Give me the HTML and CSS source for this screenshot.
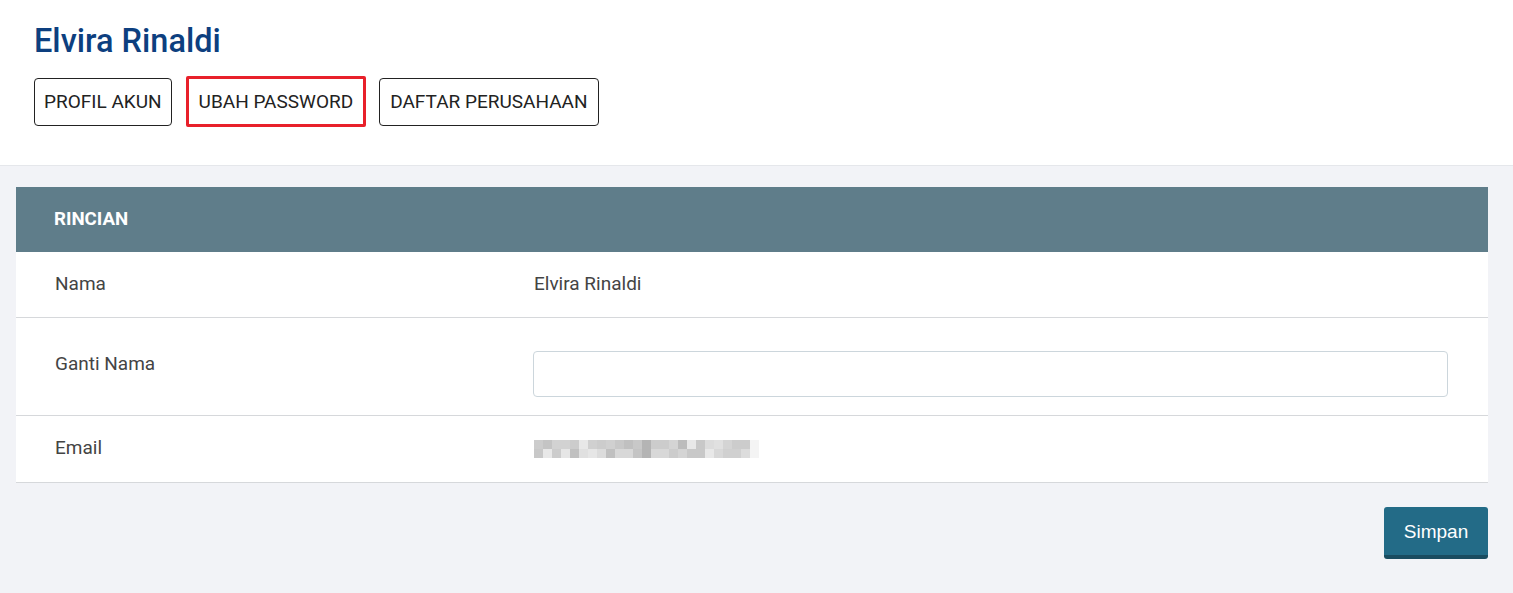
FILE: index.html
```html
<!DOCTYPE html>
<html lang="id">
<head>
    <meta charset="UTF-8">
    <title>Elvira Rinaldi - Ubah Password</title>
    <link rel="stylesheet" href="styles.css">
</head>
<body>
    <header class="page-header">
        <h1 class="user-name">Elvira Rinaldi</h1>
        <nav class="tabs">
            <button class="tab">PROFIL AKUN</button>
            <button class="tab tab-active">UBAH PASSWORD</button>
            <button class="tab tab-wide">DAFTAR PERUSAHAAN</button>
        </nav>
    </header>

    <main class="content">
        <section class="card">
            <div class="card-title">RINCIAN</div>
            <div class="row">
                <div class="label">Nama</div>
                <div class="value">Elvira Rinaldi</div>
            </div>
            <div class="row row-input">
                <div class="label">Ganti Nama</div>
                <div class="value"><input type="text" class="text-input"></div>
            </div>
            <div class="row">
                <div class="label">Email</div>
                <div class="value"><span class="email-mask"></span></div>
            </div>
        </section>

        <div class="actions">
            <button class="save-button">Simpan</button>
        </div>
    </main>
</body>
</html>
```

FILE: styles.css
```css
body {
    margin: 0;
    font-family: 'Roboto', 'Liberation Sans', sans-serif;
    background-color: #f2f3f7;
    color: #444;
}

.page-header {
    background-color: #fff;
    border-bottom: 1px solid #e5e7eb;
    padding: 21px 34px 38px;
}

.user-name {
    margin: 0 0 15px;
    font-size: 32.5px;
    font-weight: 500;
    color: #0d3f7f;
    line-height: 40px;
}

.tabs {
    display: flex;
    align-items: center;
}

.tab {
    font-family: 'Roboto', 'Liberation Sans', sans-serif;
    font-size: 19px;
    color: #222;
    background-color: #fff;
    border: 1px solid #222;
    border-radius: 4px;
    height: 48px;
    padding: 0 9px;
    margin-right: 14px;
    cursor: pointer;
}

.tab-wide {
    padding: 0 10px;
}

/* tab yang sedang dipilih */
.tab-active {
    border: 3px solid #e8202a;
    border-radius: 2px;
    height: 51px;
    padding: 0 10px;
    margin-right: 13px;
}

.content {
    padding: 21px 25px 34px 16px;
}

.card {
    background-color: #fff;
    border-bottom: 1px solid #d6d8db;
}

.card-title {
    background-color: #5f7d8a;
    color: #fff;
    font-weight: 700;
    font-size: 18.7px;
    height: 65px;
    line-height: 65px;
    padding-left: 38px;
}

.row {
    display: flex;
    padding: 21px 39px 22px;
    border-bottom: 1px solid #d6d8db;
    font-size: 19px;
    line-height: 22px;
}

.row:last-child {
    border-bottom: none;
    padding-bottom: 23px;
}

.row-input {
    padding-top: 33px;
    padding-bottom: 18px;
}

.row-input .label {
    padding-top: 2px;
}

.label {
    width: 479px;
    flex-shrink: 0;
}

.value {
    flex: 1;
}

.text-input {
    box-sizing: border-box;
    width: 100%;
    height: 46px;
    border: 1px solid #ccd6dc;
    border-radius: 4px;
    margin-left: -1px;
    font-size: 16px;
    padding: 0 12px;
}

.email-mask {
    display: inline-block;
    vertical-align: middle;
    width: 225px;
    height: 18px;
    background-image:
        linear-gradient(to right, #ccc 0 9px, #c4c4c4 9px 18px, #d2d2d2 18px 36px, #ccc 36px 45px, #e8e8e8 45px 54px, #d0d0d0 54px 63px, #ccc 63px 72px, #d0d0d0 72px 81px, #c8c8c8 81px 90px, #c0c0c0 90px 99px, #c8c8c8 99px 108px, #b4b4b4 108px 117px, #ccc 117px 135px, #d4d4d4 135px 144px, #bcbcbc 144px 153px, #e8e8e8 153px 162px, #c8c8c8 162px 171px, #dcdcdc 171px 180px, #e0e0e0 180px 189px, #d4d4d4 189px 198px, #ccc 198px 216px, #f4f4f4 216px 225px),
        linear-gradient(to right, #c8c8c8 0 9px, #e8e8e8 9px 18px, #ccc 18px 27px, #e6e6e6 27px 36px, #c0c0c0 36px 45px, #e0e0e0 45px 54px, #e6e6e6 54px 63px, #dcdcdc 63px 72px, #c0c0c0 72px 81px, #d8d8d8 81px 99px, #c4c4c4 99px 108px, #b4b4b4 108px 117px, #d8d8d8 117px 135px, #ccc 135px 144px, #d4d4d4 144px 153px, #c8c8c8 153px 171px, #e8e8e8 171px 180px, #d8d8d8 180px 189px, #d0d0d0 189px 207px, #dcdcdc 207px 216px, #f4f4f4 216px 225px);
    background-size: 100% 9px, 100% 9px;
    background-position: top left, bottom left;
    background-repeat: no-repeat;
}

.actions {
    display: flex;
    justify-content: flex-end;
    margin-top: 24px;
}

.save-button {
    font-family: 'Liberation Sans', Arial, sans-serif;
    font-size: 19px;
    color: #fff;
    background-color: #236b87;
    border: none;
    border-bottom: 4px solid #1a4c60;
    border-radius: 3px;
    width: 104px;
    height: 52px;
    padding: 2px 0 0;
    cursor: pointer;
}
```
